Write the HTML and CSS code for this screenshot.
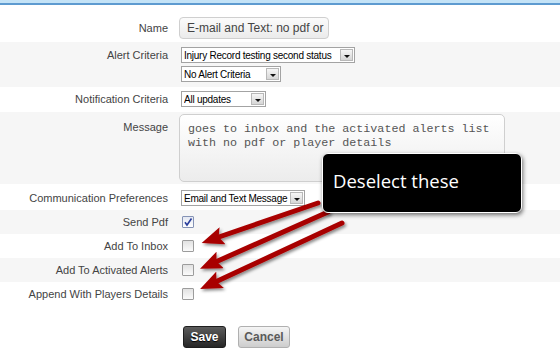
FILE: index.html
```html
<!DOCTYPE html>
<html lang="en">
<head>
    <meta charset="UTF-8">
    <title>Alert</title>
    <link rel="stylesheet" href="styles.css">
</head>
<body>
    <div class="topbar"></div>

    <div class="form">
        <div class="row name-row">
            <div class="label">Name</div>
            <div class="field"><div class="text-input">E-mail and Text: no pdf or</div></div>
        </div>

        <div class="row alt select-row">
            <div class="label">Alert Criteria</div>
            <div class="field stack">
                <div class="select sel-long"><span class="select-text">Injury Record testing second status</span><span class="select-btn"></span></div>
                <div class="select sel-alert"><span class="select-text">No Alert Criteria</span><span class="select-btn"></span></div>
            </div>
        </div>

        <div class="row select-row notif-row">
            <div class="label">Notification Criteria</div>
            <div class="field">
                <div class="select sel-updates"><span class="select-text">All updates</span><span class="select-btn"></span></div>
            </div>
        </div>

        <div class="row alt message-row">
            <div class="label">Message</div>
            <div class="field">
                <div class="textarea">goes to inbox and the activated alerts list<br>with no pdf or player details</div>
            </div>
        </div>

        <div class="row select-row comm-row">
            <div class="label">Communication Preferences</div>
            <div class="field">
                <div class="select sel-comm"><span class="select-text">Email and Text Message</span><span class="select-btn"></span></div>
            </div>
        </div>

        <div class="row alt check-row">
            <div class="label">Send Pdf</div>
            <div class="field">
                <span class="check checked">
                    <svg width="10" height="10" viewBox="0 0 10 10"><path d="M2 5.2 L4 8 L8.5 1.5" fill="none" stroke="#2b3f9c" stroke-width="1.6"/></svg>
                </span>
            </div>
        </div>

        <div class="row check-row">
            <div class="label">Add To Inbox</div>
            <div class="field"><span class="check"></span></div>
        </div>

        <div class="row alt check-row">
            <div class="label">Add To Activated Alerts</div>
            <div class="field"><span class="check"></span></div>
        </div>

        <div class="row check-row">
            <div class="label">Append With Players Details</div>
            <div class="field"><span class="check"></span></div>
        </div>

        <div class="actions">
            <button class="btn btn-save">Save</button>
            <button class="btn btn-cancel">Cancel</button>
        </div>
    </div>

    <!-- annotation arrows -->
    <svg class="arrows" width="560" height="363" viewBox="0 0 560 363">
        <defs>
            <filter id="shadow" x="-20%" y="-20%" width="140%" height="140%">
                <feDropShadow dx="1.5" dy="2" stdDeviation="1.5" flood-color="#000" flood-opacity="0.45"/>
            </filter>
            <marker id="head" markerWidth="22" markerHeight="18" refX="10" refY="9" orient="auto" markerUnits="userSpaceOnUse">
                <path d="M0 0 L22 9 L0 18 L4 9 Z" fill="#a80000"/>
            </marker>
        </defs>
        <g filter="url(#shadow)" stroke="#a80000" stroke-width="5" stroke-linecap="round" fill="none">
            <line x1="318" y1="203" x2="213" y2="239" marker-end="url(#head)"/>
            <line x1="328" y1="212" x2="211" y2="264" marker-end="url(#head)"/>
            <line x1="342" y1="223" x2="211" y2="284" marker-end="url(#head)"/>
        </g>
    </svg>

    <div class="callout">Deselect these</div>
</body>
</html>
```

FILE: styles.css
```css
*{
    margin: 0;
    padding: 0;
    box-sizing: border-box;
}

body{
    font-family: "Liberation Sans", Arial, sans-serif;
    background-color: #fff;
    width: 560px;
    height: 363px;
    overflow: hidden;
    position: relative;
}

.topbar{
    height: 5px;
    background-color: #c4e3f7;
    border-bottom: 2px solid #5e9bd0;
}

.row{
    display: grid;
    grid-template-columns: 168px auto;
    column-gap: 11px;
    align-items: start;
}
.row.alt{
    background-color: #f6f6f6;
}

.label{
    text-align: right;
    font-size: 11px;
    color: #444;
    line-height: 16px;
}

.field{
    display: flex;
}
.field.stack{
    flex-direction: column;
    align-items: flex-start;
    gap: 3px;
}

/* name */
.name-row{
    padding: 12px 0 3px;
}
.name-row .label{
    line-height: 22px;
}
.text-input{
    width: 150px;
    height: 22px;
    border: 1px solid #cfcfcf;
    border-radius: 4px;
    background: linear-gradient(#fbfbfb, #ebebeb);
    padding-left: 7px;
    font-size: 12px;
    line-height: 20px;
    color: #444;
    white-space: nowrap;
    overflow: hidden;
}

/* selects */
.select-row{
    padding: 5px 0;
}
.notif-row{
    padding: 4px 0 5px;
}
.comm-row{
    padding: 6px 0 4px;
}
.select{
    display: flex;
    align-items: center;
    height: 16px;
    margin-left: 2px;
    border: 1px solid #a3a3a3;
    background-color: #fff;
    font-size: 10px;
    letter-spacing: -0.25px;
    color: #000;
    padding-left: 2px;
}
.select-text{
    flex: 1;
    white-space: nowrap;
    overflow: hidden;
}
.select-btn{
    flex: none;
    width: 13px;
    height: 12px;
    margin: 0 1px 0 2px;
    border: 1px solid #b8b8b8;
    background: linear-gradient(#f6f6f6, #d6d6d6);
    position: relative;
}
.select-btn::after{
    content: "";
    position: absolute;
    left: 3px;
    top: 5px;
    border-left: 3px solid transparent;
    border-right: 3px solid transparent;
    border-top: 3px solid #111;
}
.sel-long{ width: 174px; }
.sel-alert{ width: 100px; }
.sel-updates{ width: 85px; }
.sel-comm{ width: 124px; }

/* message */
.message-row{
    padding: 2px 0;
}
.message-row .label{
    padding-top: 5px;
}
.textarea{
    width: 326px;
    height: 68px;
    border: 1px solid #cfcfcf;
    border-radius: 5px;
    background: linear-gradient(#ffffff, #ececec);
    padding: 7px 8px;
    font-family: "Liberation Mono", "Courier New", monospace;
    font-size: 11.7px;
    line-height: 14px;
    color: #555;
    white-space: nowrap;
}

/* checkboxes */
.check-row{
    height: 24px;
    align-items: center;
}
.check{
    display: flex;
    align-items: center;
    justify-content: center;
    width: 12px;
    height: 12px;
    margin-left: 3px;
    border: 1px solid #9c9c9c;
    border-radius: 1px;
    background: linear-gradient(#e2e2e2, #fbfbfb);
}
.check.checked{
    border-color: #8593b5;
    background: linear-gradient(#e4e8f2, #ffffff);
}

/* buttons */
.actions{
    display: flex;
    gap: 12px;
    margin: 20px 0 0 183px;
}
.btn{
    height: 22px;
    border-radius: 3px;
    font-family: "Liberation Sans", Arial, sans-serif;
    font-size: 12px;
    font-weight: bold;
}
.btn-save{
    width: 43px;
    border: 1px solid #1e1e1e;
    background: linear-gradient(#5c5c5c, #262626);
    color: #fff;
    text-shadow: 0 1px 1px #000;
}
.btn-cancel{
    width: 52px;
    border: 1px solid #b0b0b0;
    background: linear-gradient(#f5f5f5, #cdcdcd);
    color: #5a5a5a;
}

/* annotation */
.arrows{
    position: absolute;
    top: 0;
    left: 0;
    pointer-events: none;
}
.callout{
    position: absolute;
    left: 322px;
    top: 153px;
    width: 200px;
    height: 60px;
    background-color: #000;
    border: 1.5px solid #fff;
    border-radius: 6px;
    box-shadow: 1px 2px 4px rgba(0, 0, 0, 0.55);
    padding: 14px 0 0 10px;
    font-family: "Open Sans", sans-serif;
    font-size: 18.5px;
    color: #fff;
}
```
